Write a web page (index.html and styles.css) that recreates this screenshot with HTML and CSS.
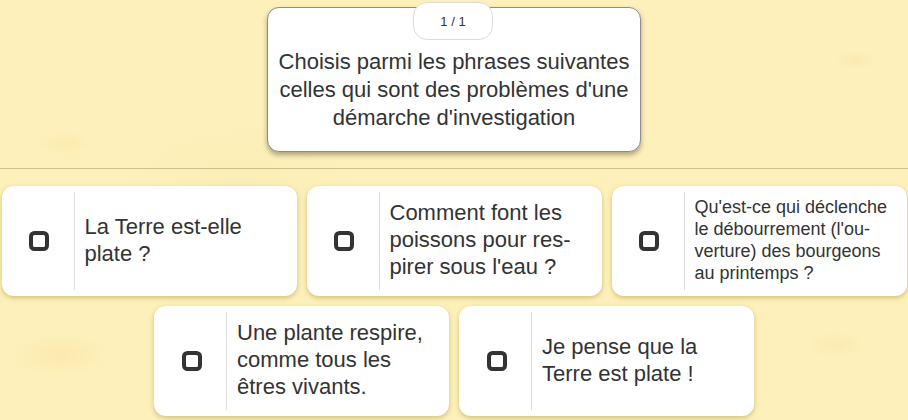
FILE: index.html
```html
<!DOCTYPE html>
<html lang="fr">
<head>
<meta charset="utf-8">
<title>Question</title>
<link rel="stylesheet" href="styles.css">
</head>
<body>
<div class="page">
  <div class="question-wrap">
    <div class="question">
      <div class="badge">1 / 1</div>
      <p class="question-text">Choisis parmi les phrases suivantes celles qui sont des problèmes d'une démarche d'investigation</p>
    </div>
  </div>
  <hr class="sep">
  <div class="answers">
    <div class="answer">
      <div class="check"><svg width="20" height="20" viewBox="0 0 20 20"><rect x="2" y="2" width="16" height="16" rx="3.5" fill="none" stroke="#333" stroke-width="4"/></svg></div>
      <div class="label">La Terre est-elle plate ?</div>
    </div>
    <div class="answer">
      <div class="check"><svg width="20" height="20" viewBox="0 0 20 20"><rect x="2" y="2" width="16" height="16" rx="3.5" fill="none" stroke="#333" stroke-width="4"/></svg></div>
      <div class="label">Comment font les poissons pour res&shy;pirer sous l'eau ?</div>
    </div>
    <div class="answer">
      <div class="check"><svg width="20" height="20" viewBox="0 0 20 20"><rect x="2" y="2" width="16" height="16" rx="3.5" fill="none" stroke="#333" stroke-width="4"/></svg></div>
      <div class="label small">Qu'est-ce qui déclenche le débourrement (l'ou&shy;verture) des bourgeons au printemps ?</div>
    </div>
    <div class="answer">
      <div class="check"><svg width="20" height="20" viewBox="0 0 20 20"><rect x="2" y="2" width="16" height="16" rx="3.5" fill="none" stroke="#333" stroke-width="4"/></svg></div>
      <div class="label">Une plante respire, comme tous les êtres vivants.</div>
    </div>
    <div class="answer">
      <div class="check"><svg width="20" height="20" viewBox="0 0 20 20"><rect x="2" y="2" width="16" height="16" rx="3.5" fill="none" stroke="#333" stroke-width="4"/></svg></div>
      <div class="label">Je pense que la Terre est plate !</div>
    </div>
  </div>
</div>
</body>
</html>
```
FILE: styles.css
```css
html, body {
  margin: 0;
  padding: 0;
}
body {
  width: 908px;
  height: 420px;
  overflow: hidden;
  font-family: "Liberation Sans", Arial, sans-serif;
  color: #333;
  background-color: #fdf0ba;
  background-image:
    radial-gradient(ellipse 30px 12px at 65px 143px, rgba(245, 215, 140, 0.2), transparent),
    radial-gradient(ellipse 20px 10px at 855px 60px, rgba(245, 205, 130, 0.2), transparent),
    radial-gradient(ellipse 50px 22px at 60px 355px, rgba(245, 215, 140, 0.25), transparent),
    radial-gradient(ellipse 30px 14px at 835px 345px, rgba(245, 215, 140, 0.2), transparent),
    radial-gradient(ellipse 120px 60px at 240px 180px, rgba(250, 228, 165, 0.2), transparent);
}
.page {
  display: flex;
  flex-direction: column;
}
.question-wrap {
  display: flex;
  justify-content: center;
  padding-top: 7px;
}
.question {
  position: relative;
  width: 374px;
  box-sizing: border-box;
  background: #fff;
  border: 1px solid #8c8c8c;
  border-radius: 12px;
  box-shadow: 0 3px 5px rgba(60, 50, 20, 0.4);
  padding: 40px 4px 19px;
}
.badge {
  position: absolute;
  top: -6px;
  left: 145px;
  width: 80px;
  height: 38px;
  box-sizing: border-box;
  border: 1px solid #dcdcdc;
  border-radius: 14px;
  background: #fff;
  font-size: 13px;
  color: #333;
  display: flex;
  align-items: center;
  justify-content: center;
}
.question-text {
  margin: 0;
  text-align: center;
  font-size: 22px;
  line-height: 28px;
}
.sep {
  margin: 16px 0 0;
  border: 0;
  height: 1px;
  background: #cbbf90;
}
.answers {
  display: flex;
  flex-wrap: wrap;
  justify-content: center;
  gap: 10px;
  padding-top: 17px;
}
.answer {
  width: 295px;
  height: 110px;
  box-sizing: border-box;
  background: #fff;
  border-radius: 12px;
  box-shadow: 0 2px 5px rgba(150, 120, 30, 0.4);
  padding: 6px 0;
  display: flex;
}
.check {
  width: 73px;
  box-sizing: border-box;
  border-right: 1px solid #dedede;
  padding-left: 3px;
  display: flex;
  align-items: center;
  justify-content: center;
}
.check svg {
  display: block;
}
.label {
  flex: 1;
  padding: 0 12px 3px 10px;
  display: flex;
  align-items: center;
  font-size: 22px;
  line-height: 27px;
}
.label.small {
  font-size: 18px;
  line-height: 22px;
}
```
